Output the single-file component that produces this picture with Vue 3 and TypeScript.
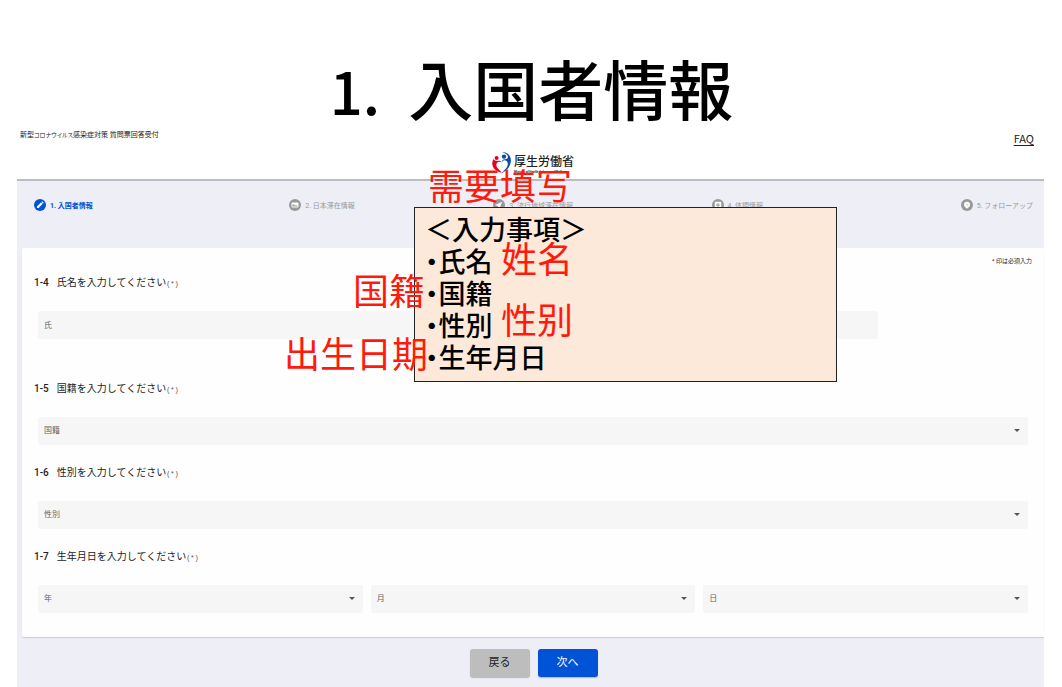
<script setup lang="ts">
import { reactive } from 'vue'

type StepIcon = 'pencil' | 'bed' | 'plane' | 'medical' | 'clock'

interface Step {
  label: string
  icon: StepIcon
  current: boolean
}

const steps: Step[] = [
  { label: '1. 入国者情報', icon: 'pencil', current: true },
  { label: '2. 日本滞在情報', icon: 'bed', current: false },
  { label: '3. 流行地域滞在情報', icon: 'plane', current: false },
  { label: '4. 体調情報', icon: 'medical', current: false },
  { label: '5. フォローアップ', icon: 'clock', current: false },
]

const form = reactive({ name: '', nationality: '', gender: '', year: '', month: '', day: '' })

const dateParts: { key: 'year' | 'month' | 'day'; label: string }[] = [
  { key: 'year', label: '年' },
  { key: 'month', label: '月' },
  { key: 'day', label: '日' },
]

const items = ['氏名', '国籍', '性別', '生年月日']
</script>

<template>
  <main class="slide">
    <h1 class="title"><span class="num">1.</span>入国者情報</h1>

    <div class="app">
      <header class="header">
        <span class="service">新型<span class="kana">コロナウイルス</span>感染症対策 質問票回答受付</span>
        <div class="brand">
          <svg class="mark" viewBox="0 0 20 22" aria-hidden="true">
            <circle cx="4.6" cy="6" r="2" fill="#e60020" />
            <path d="M1.500 7C-.8 11 .2 15.500 3.600 18c1.800 1.400 3.700 1.900 6.200 3.200-.8-2-2.900-3.300-4.300-5.100C4.200 14.400 4 12.400 4.900 11c1-1.500 3-1.700 4.600-.4C9 8.900 7.600 8.400 6 8.800 4.200 9.300 2.600 8.700 1.500 7z" fill="#e60020" />
            <circle cx="12" cy="4.600" r="2.200" fill="#0a4ea2" />
            <path d="M10.400.4c4.800-.5 8.500 3.200 8.500 8.200 0 5.300-3.600 9.700-9.100 12.600 1.500-2.600 5.200-4.700 5.900-8.300.5-2.600-.7-4.400-2.700-4.700-1.500-.2-2.500.7-3.200 2.300C9.600 8.400 10.800 7.300 13 7.200c2.100-.1 3.200-1.200 2.900-2.900C15.500 2.300 13 .9 10.400.4z" fill="#0a4ea2" />
          </svg>
          <div class="names">
            <span class="ja">厚生労働省</span>
            <span class="en">Ministry of Health, Labour and Welfare</span>
          </div>
        </div>
        <a class="faq" href="#faq">FAQ</a>
      </header>

      <ol class="steps">
        <li v-for="s in steps" :key="s.label" class="step" :class="{ current: s.current }">
          <svg class="step-icon" viewBox="0 0 24 24" aria-hidden="true">
            <circle cx="12" cy="12" r="12" fill="currentColor" />
            <path v-if="s.icon === 'pencil'" d="M6 18v-3.200l7.800-7.800 3.200 3.200L9.200 18zM14.700 6.100l1-1c.4-.4.9-.4 1.200 0l2 2c.4.4.4.9 0 1.200l-1 1z" fill="#fff" />
            <g v-else-if="s.icon === 'bed'">
              <rect x="5" y="7" width="14" height="10" rx="2" fill="#fff" />
              <path d="M7 11h4v2h6v2H7z" fill="currentColor" />
            </g>
            <path v-else-if="s.icon === 'plane'" d="M18.500 5.500 5 11.300v1.200l5 1.700 1.700 4.800h1.200z" fill="#fff" />
            <g v-else-if="s.icon === 'medical'">
              <rect x="5.500" y="5.500" width="13" height="13" rx="1.500" fill="#fff" />
              <path d="M11 8h2v3h3v2h-3v3h-2v-3H8v-2h3z" fill="currentColor" />
            </g>
            <g v-else>
              <path d="M12 5.500c4 0 6 2.500 6 6 0 4-3 5-6 8-3-3-6-4-6-8 0-3.500 2-6 6-6z" fill="#fff" />
              <path d="M12 9v3l2 1" fill="none" stroke="currentColor" stroke-width="1" />
            </g>
          </svg>
          <span>{{ s.label }}</span>
        </li>
      </ol>

      <form class="card" @submit.prevent>
        <p class="note">* 印は必須入力</p>

        <section class="question wide-gap">
          <label class="label" for="name"><b>1-4</b>氏名を入力してください<small>(*)</small></label>
          <div class="field name-field">
            <input id="name" v-model="form.name" type="text" placeholder="氏" />
          </div>
        </section>

        <section class="question">
          <label class="label" for="nationality"><b>1-5</b>国籍を入力してください<small>(*)</small></label>
          <div class="field">
            <select id="nationality" v-model="form.nationality">
              <option value="">国籍</option>
            </select>
            <svg class="arrow" viewBox="0 0 6 3" aria-hidden="true"><path d="M0 0h6L3 3z" /></svg>
          </div>
        </section>

        <section class="question">
          <label class="label" for="gender"><b>1-6</b>性別を入力してください<small>(*)</small></label>
          <div class="field">
            <select id="gender" v-model="form.gender">
              <option value="">性別</option>
            </select>
            <svg class="arrow" viewBox="0 0 6 3" aria-hidden="true"><path d="M0 0h6L3 3z" /></svg>
          </div>
        </section>

        <section class="question">
          <label class="label" for="year"><b>1-7</b>生年月日を入力してください<small>(*)</small></label>
          <div class="dates">
            <div v-for="p in dateParts" :key="p.key" class="field">
              <select :id="p.key" v-model="form[p.key]" :aria-label="p.label">
                <option value="">{{ p.label }}</option>
              </select>
              <svg class="arrow" viewBox="0 0 6 3" aria-hidden="true"><path d="M0 0h6L3 3z" /></svg>
            </div>
          </div>
        </section>
      </form>

      <div class="actions">
        <button type="button" class="btn back">戻る</button>
        <button type="button" class="btn next">次へ</button>
      </div>
    </div>

    <aside class="callout">
      <p>＜入力事項＞</p>
      <ul>
        <li v-for="i in items" :key="i">・{{ i }}</li>
      </ul>
    </aside>
    <span class="gloss g-required" lang="zh">需要填写</span>
    <span class="gloss g-name" lang="zh">姓名</span>
    <span class="gloss g-nationality" lang="zh">国籍</span>
    <span class="gloss g-gender" lang="zh">性别</span>
    <span class="gloss g-birth" lang="zh">出生日期</span>
  </main>
</template>

<style>
body {
  margin: 0;
  background: #fff;
}
</style>

<style scoped>
* {
  box-sizing: border-box;
}
.slide {
  position: relative;
  display: flex;
  flex-direction: column;
  min-height: 100vh;
  padding: 0 18px 0 17px;
  overflow: hidden;
  font-family: Roboto, "Noto Sans CJK JP", sans-serif;
  color: #222;
}
.title {
  margin: 0;
  padding: 51px 0 3px 2px;
  text-align: center;
  font: 500 65px/72px "Noto Sans CJK JP", sans-serif;
  color: #000;
}
.num {
  margin-right: 28px;
  font-size: 58px;
  line-height: 60px;
}
.app {
  flex: 1;
  display: flex;
  flex-direction: column;
  background: #eeeef7;
}
.header {
  display: grid;
  grid-template-columns: 1fr auto 1fr;
  align-items: start;
  height: 55px;
  padding: 0 10px 0 3px;
  border-bottom: 2px solid #bdbdc0;
  background: #fff;
}
.service {
  padding-top: 4px;
  font-size: 7px;
  line-height: 10px;
  font-feature-settings: "palt";
  white-space: nowrap;
}
.kana {
  font-size: 6px;
}
.brand {
  display: flex;
  gap: 2px;
  padding: 26px 0 0 12px;
}
.mark {
  width: 20px;
  height: 22px;
}
.names {
  display: flex;
  flex-direction: column;
  white-space: nowrap;
}
.ja {
  font: 500 12px/18px "Noto Sans CJK JP", sans-serif;
}
.en {
  font-size: 3px;
  line-height: 4px;
  font-weight: 700;
}
.faq {
  justify-self: end;
  padding-top: 4px;
  font: 11px/16px "Noto Sans CJK JP", sans-serif;
  color: #222;
  text-underline-offset: 2px;
}
.steps {
  display: grid;
  grid-template-columns: 255fr 204fr 218fr 249fr auto;
  height: 67px;
  margin: 0;
  padding: 18px 11px 0 17px;
  list-style: none;
}
.step {
  display: flex;
  align-items: center;
  gap: 4px;
  height: 12px;
  font-size: 7px;
  color: #999;
  white-space: nowrap;
}
.current {
  color: #0053d6;
  font-weight: 700;
}
.step-icon {
  width: 12px;
  height: 12px;
}
.card {
  margin-left: 5px;
  padding: 7px 12px 24px;
  border-radius: 2px 0 0 2px;
  background: #fefefe;
  box-shadow: 0 1px 1px #ccc;
}
.note {
  margin: 0 0 8px;
  text-align: right;
  font-size: 6px;
  line-height: 12px;
}
.question + .question {
  margin-top: 20px;
}
.question.wide-gap + .question {
  margin-top: 42px;
}
.label {
  display: block;
  height: 16px;
  margin-bottom: 20px;
  font-size: 10px;
  line-height: 16px;
}
.label b {
  margin-right: 8px;
  font-weight: 500;
}
.label small {
  font: 7px/8px "Liberation Mono", monospace;
  color: #555;
}
.field {
  position: relative;
  margin: 0 4px;
}
.name-field {
  margin-right: calc(15% + 4px);
}
.dates {
  display: grid;
  grid-template-columns: repeat(3, 1fr);
  gap: 8px;
  margin: 0 4px;
}
.dates .field {
  margin: 0;
}
input,
select {
  display: block;
  width: 100%;
  height: 28px;
  margin: 0;
  padding: 0 6px;
  border: 0;
  border-radius: 2px;
  appearance: none;
  background: #f6f6f6;
  font: 8px/12px Roboto, "Noto Sans CJK JP", sans-serif;
  color: #666;
}
input::placeholder {
  color: #666;
}
.arrow {
  position: absolute;
  top: 12px;
  right: 8px;
  width: 6px;
  height: 3px;
  fill: #555;
  pointer-events: none;
}
.actions {
  display: flex;
  justify-content: center;
  gap: 8px;
  padding: 12px 0 9px 6px;
}
.btn {
  width: 60px;
  height: 28px;
  padding: 0;
  border: 0;
  border-radius: 3px;
  box-shadow: 0 1px 1px #8888;
  font: 11px/16px Roboto, "Noto Sans CJK JP", sans-serif;
}
.back {
  background: #bdbdbd;
  color: #222;
}
.next {
  background: #0053d6;
  color: #fff;
}
.callout {
  position: absolute;
  left: 414px;
  top: 207px;
  width: 423px;
  padding: 5px 10px 8px;
  border: 1px solid #222;
  background: #fde9d9;
  font: 500 27px/32px "Noto Sans CJK JP", sans-serif;
  color: #000;
}
.callout p {
  margin: 0;
}
.callout ul {
  margin: 0;
  padding: 0;
  list-style: none;
  font-feature-settings: "halt";
}
.gloss {
  position: absolute;
  font: 36px/40px "Noto Sans CJK SC", sans-serif;
  color: #ff1a0d;
  white-space: nowrap;
}
.g-required {
  left: 428px;
  top: 164px;
}
.g-name {
  left: 501px;
  top: 237px;
}
.g-nationality {
  left: 353px;
  top: 269px;
}
.g-gender {
  left: 501px;
  top: 298px;
}
.g-birth {
  left: 284px;
  top: 332px;
}
</style>
